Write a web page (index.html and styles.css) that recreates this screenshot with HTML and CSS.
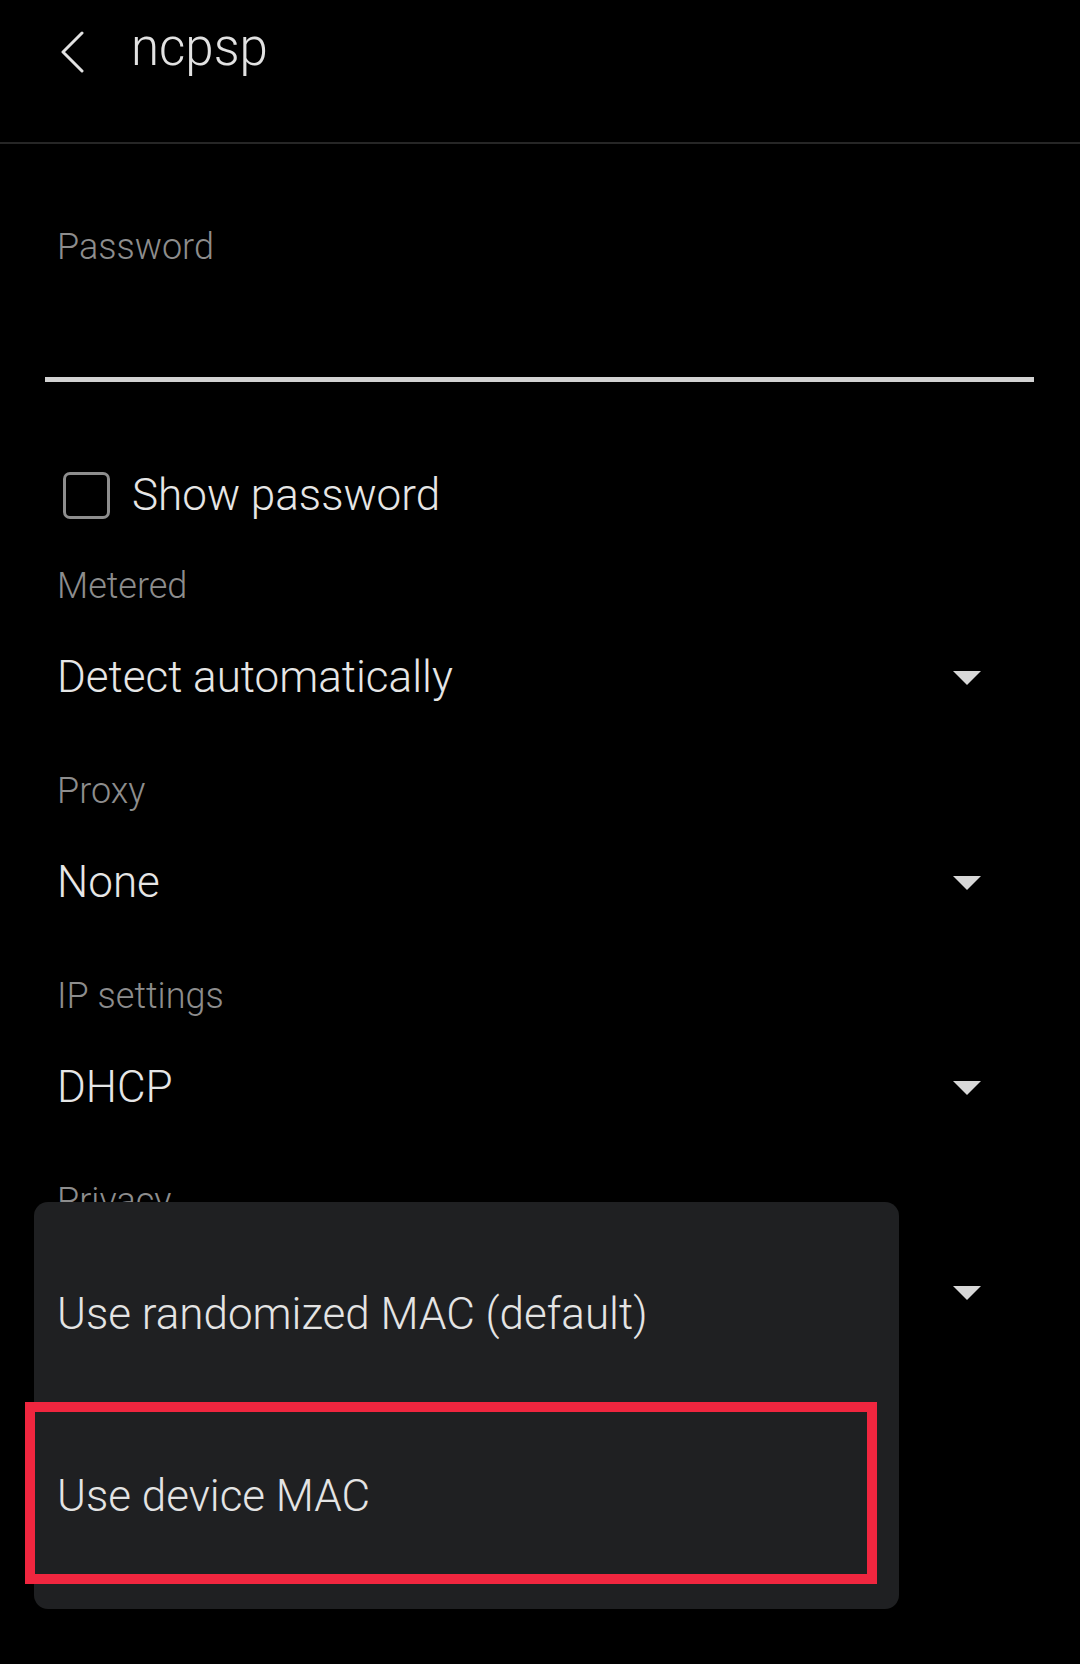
FILE: index.html
```html
<!DOCTYPE html>
<html>
<head>
<meta charset="utf-8">
<link rel="stylesheet" href="styles.css">
</head>
<body>
<div class="screen">
  <header class="topbar">
    <svg class="back" width="26" height="42" viewBox="0 0 26 42">
      <polyline points="22,2 3,21 22,40" fill="none" stroke="#e2e2e2" stroke-width="3" stroke-linecap="round" stroke-linejoin="round"/>
    </svg>
    <span class="title">ncpsp</span>
  </header>
  <div class="divider"></div>

  <main class="form">
    <div class="label first">Password</div>
    <div class="input-line"></div>

    <label class="check-row">
      <span class="checkbox"></span>
      <span class="check-text">Show password</span>
    </label>

    <section class="field">
      <div class="label">Metered</div>
      <div class="value-row"><span class="value">Detect automatically</span><span class="caret"></span></div>
    </section>
    <section class="field">
      <div class="label">Proxy</div>
      <div class="value-row"><span class="value">None</span><span class="caret"></span></div>
    </section>
    <section class="field">
      <div class="label">IP settings</div>
      <div class="value-row"><span class="value">DHCP</span><span class="caret"></span></div>
    </section>
    <section class="field">
      <div class="label">Privacy</div>
      <div class="value-row"><span class="value"></span><span class="caret"></span></div>
    </section>
  </main>

  <div class="menu">
    <div class="menu-item">Use randomized MAC (default)</div>
    <div class="menu-item highlighted">Use device MAC</div>
  </div>
</div>
</body>
</html>
```

FILE: styles.css
```css
html, body {
  margin: 0;
  padding: 0;
  background: #000;
}

.screen {
  position: relative;
  width: 1080px;
  height: 1664px;
  overflow: hidden;
  background: #000;
  font-family: Roboto, "Noto Sans", "Liberation Sans", sans-serif;
  font-weight: 300;
  color: #e3e3e3;
}

.topbar {
  height: 102px;
  display: flex;
  align-items: center;
  padding-left: 60px;
  margin-bottom: 40px;
}

.back {
  display: block;
  margin-top: 1px;
}

.title {
  margin-left: 45px;
  font-size: 51px;
  line-height: 60px;
  color: #e2e2e2;
  margin-top: -6px;
}

.divider {
  height: 2px;
  background: #262626;
}

.form {
  padding: 0 46px 0 45px;
}

.label {
  font-size: 36px;
  line-height: 48px;
  color: #8d8d8d;
  padding-left: 12px;
}

.label.first {
  margin-top: 79px;
}

.input-line {
  margin-top: 106px;
  height: 5px;
  background: #d2d2d2;
}

.check-row {
  display: flex;
  align-items: center;
  height: 60px;
  margin-top: 83px;
  padding-left: 18px;
}

.checkbox {
  width: 41px;
  height: 41px;
  border: 3px solid #8e8e8e;
  border-radius: 7px;
  flex: none;
}

.check-text {
  margin-left: 22px;
  font-size: 44px;
  line-height: 60px;
  color: #e6e6e6;
}

.field {
  margin-top: 37px;
}

.field + .field {
  margin-top: 60px;
}

.value-row {
  margin-top: 37px;
  height: 60px;
  display: flex;
  align-items: center;
  justify-content: space-between;
  padding-left: 12px;
  padding-right: 53px;
}

.value {
  font-size: 44px;
  line-height: 60px;
  color: #e6e6e6;
}

.caret {
  width: 0;
  height: 0;
  border-left: 14px solid transparent;
  border-right: 14px solid transparent;
  border-top: 14px solid #d8d8d8;
  margin-top: 2px;
}

.menu {
  position: absolute;
  left: 34px;
  top: 1202px;
  width: 865px;
  height: 407px;
  box-sizing: border-box;
  padding-top: 21px;
  background: #1f2022;
  border-radius: 14px;
}

.menu-item {
  position: relative;
  height: 182px;
  display: flex;
  align-items: center;
  padding-left: 23px;
  font-size: 44px;
  color: #e4e4e4;
}

.menu-item.highlighted::after {
  content: "";
  position: absolute;
  top: -3px;
  left: -9px;
  right: 22px;
  bottom: 3px;
  border: 10px solid #f0263f;
}
```
